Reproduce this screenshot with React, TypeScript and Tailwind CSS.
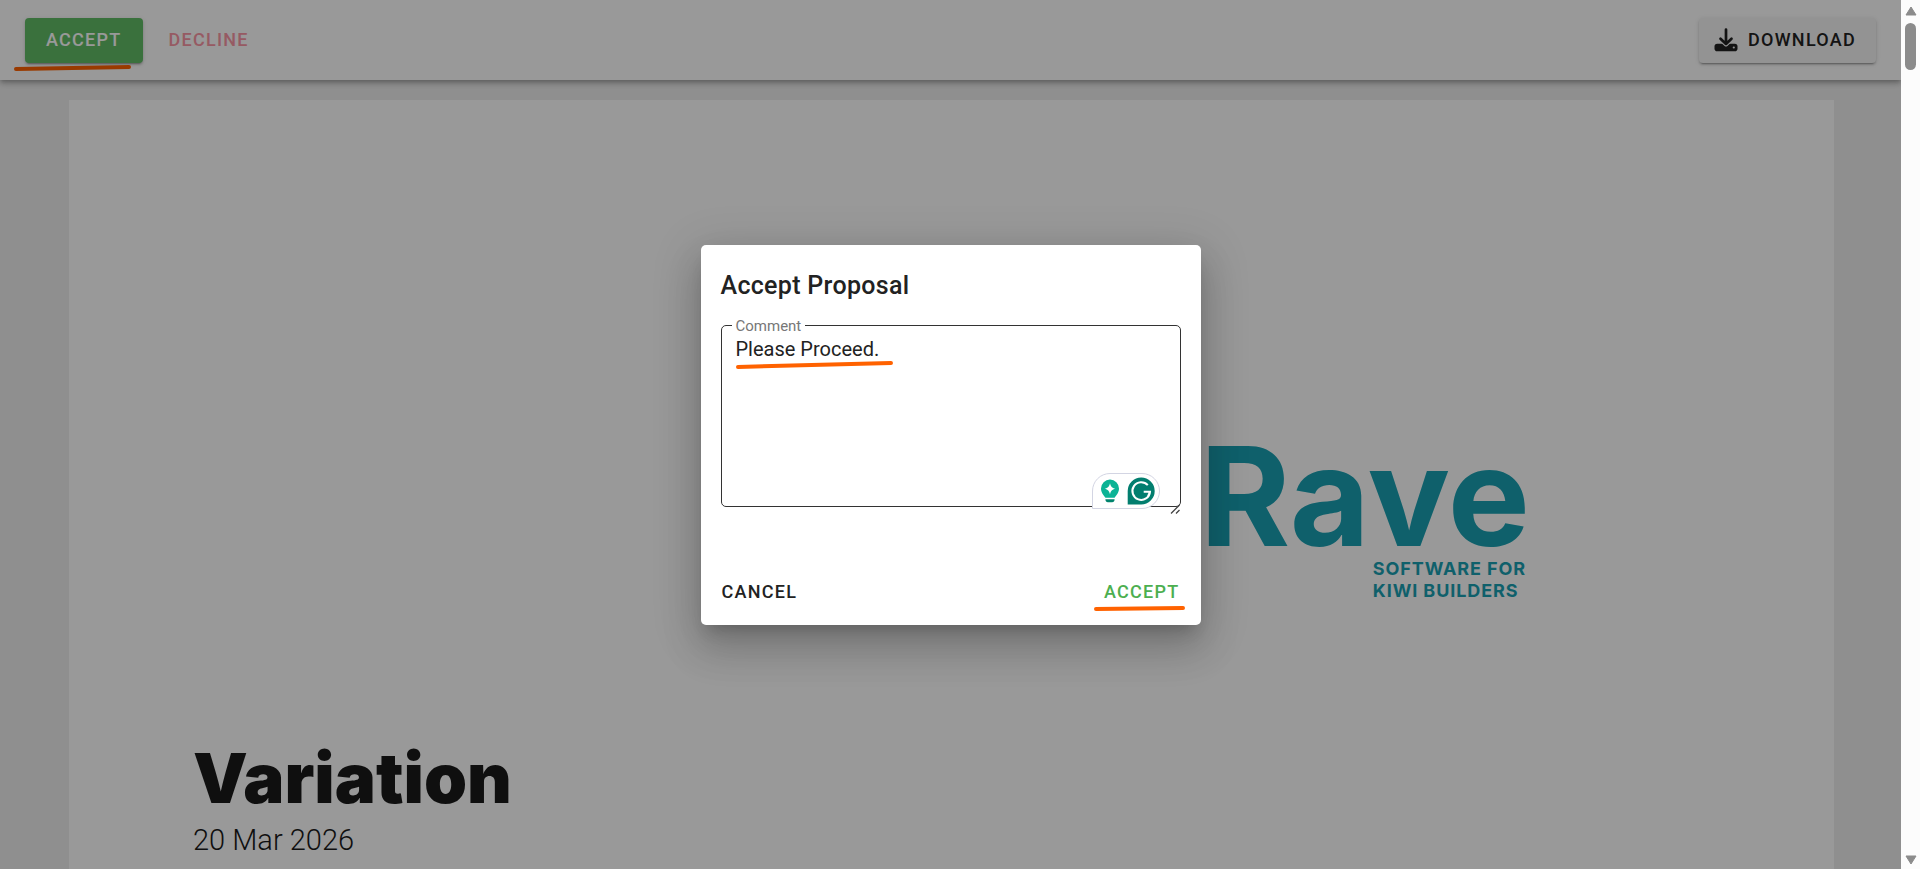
import { useState } from "react";

const Stroke = ({ className, d, viewBox }: { className: string; d: string; viewBox: string }) => (
  <svg className={`pointer-events-none absolute ${className}`} viewBox={viewBox} fill="none" aria-hidden="true">
    <path d={d} stroke="#ff6200" strokeWidth="4" strokeLinecap="round" />
  </svg>
);

const DownloadIcon = () => (
  <svg className="h-6 w-6" viewBox="0 0 24 24" fill="none" aria-hidden="true" strokeLinecap="round" strokeLinejoin="round">
    <rect x="0.5" y="15.8" width="23" height="7.4" rx="2.8" fill="#222" />
    <path d="M6.5 11.2l5.500 5.200 5.500-5.200" stroke="#f5f5f5" strokeWidth="4.2" />
    <path d="M12 1.600v14M6.500 10.700l5.500 5.200 5.500-5.200" stroke="#222" strokeWidth="2.7" />
    <circle cx="19.8" cy="19.5" r="1.1" fill="#f4f4f4" />
  </svg>
);

const AssistantBadge = () => (
  <div className="absolute right-5 -bottom-[3px] flex h-9 items-center gap-2 rounded-full rounded-bl-none border border-[#d3d5e3] bg-white pr-1 pl-2">
    <svg className="h-6 w-[18px]" viewBox="0 0 18 24" aria-hidden="true">
      <path d="M9 .5a9 9 0 0 0-9 9c0 4.200 2.600 6.600 4.400 9.200h9.200C15.400 16.100 18 13.700 18 9.500a9 9 0 0 0-9-9z" fill="#0cb395" />
      <path d="M9 4.200c.9 3.600 1.900 4.700 5.400 5.500-3.500.8-4.500 1.900-5.400 5.500-.9-3.600-1.900-4.700-5.400-5.500 3.500-.8 4.500-1.900 5.400-5.500z" fill="#fff" />
      <path d="M4.400 20.200h9.200c0 1.900-1 3-2.500 3H6.900c-1.500 0-2.500-1.100-2.500-3z" fill="#00836d" />
    </svg>
    <svg className="h-7 w-7" viewBox="0 0 28 28" aria-hidden="true">
      <path d="M14.200.5a13.500 13.500 0 1 1 0 27H.7V14A13.500 13.500 0 0 1 14.200.5z" fill="#027e6f" />
      <path d="M20.800 8.200A8.800 8.800 0 1 0 23 14.800h-6.300M23 14.800l-2.500 5.600" fill="none" stroke="#fff" strokeWidth="2" />
    </svg>
  </div>
);

const Toolbar = () => (
  <header className="relative z-10 flex h-20 items-center gap-2 bg-white px-[25px] shadow-[0_2px_4px_-1px_rgba(0,0,0,0.2),0_4px_5px_rgba(0,0,0,0.14),0_1px_10px_rgba(0,0,0,0.12)]">
    <div className="relative">
      <button className="h-[45px] rounded bg-[#62bd66] px-[21px] text-lg font-medium tracking-[0.07em] text-white shadow-[0_3px_1px_-2px_rgba(0,0,0,0.2),0_2px_2px_rgba(0,0,0,0.14),0_1px_5px_rgba(0,0,0,0.12)]">
        ACCEPT
      </button>
      <Stroke className="-bottom-2 -left-3 h-2 w-[120px]" viewBox="0 0 120 8" d="M3 6L116 4" />
    </div>
    <button className="h-[45px] px-[18px] text-lg font-medium tracking-[0.07em] text-[#fb97a5]">DECLINE</button>
    <button className="ml-auto flex h-[45px] items-center gap-2.5 rounded bg-[#f5f5f5] pr-5 pl-[15px] text-lg font-medium tracking-[0.07em] text-[#222] shadow-[0_3px_1px_-2px_rgba(0,0,0,0.2),0_2px_2px_rgba(0,0,0,0.14),0_1px_5px_rgba(0,0,0,0.12)]">
      <DownloadIcon />
      DOWNLOAD
    </button>
  </header>
);

const ProposalPage = () => (
  <article className="mt-5 mr-[67px] ml-[69px] flex flex-1 flex-col bg-white px-[124px]">
    <div className="mt-[333px] flex flex-col items-end pr-[180px] font-['Inter',sans-serif] font-bold text-[#1aa1b3]">
      <div className="text-[138px] leading-[125px]">Rave</div>
      <div className="pr-1 text-lg leading-[22px] tracking-wider">
        SOFTWARE FOR
        <br />
        KIWI BUILDERS
      </div>
    </div>
    <h1 className="mt-[134px] font-['Inter',sans-serif] text-[69px] leading-[84px] font-black text-[#1a1a1a]">
      Variation
    </h1>
    <p className="mt-0.5 text-[29px] leading-9 font-light text-[#1a1a1a]">20 Mar 2026</p>
  </article>
);

const AcceptDialog = () => {
  const [comment, setComment] = useState("Please Proceed.");

  return (
    <div
      role="dialog"
      aria-labelledby="dialog-title"
      className="w-[500px] rounded-[5px] bg-white px-5 pt-6 pb-2.5 text-[#222] shadow-[0_11px_15px_-7px_rgba(0,0,0,0.2),0_24px_38px_3px_rgba(0,0,0,0.14),0_9px_46px_8px_rgba(0,0,0,0.12)]"
    >
      <h2 id="dialog-title" className="text-[25px] leading-[34px] font-medium tracking-[0.0125em]">
        Accept Proposal
      </h2>
      <div className="relative mt-[22px] h-[182px] rounded-[5px] border border-[#333]">
        <label htmlFor="comment" className="absolute -top-2 left-2.5 bg-white px-1 text-[15px] leading-4 text-[#777]">
          Comment
        </label>
        <textarea
          id="comment"
          className="block h-full w-full resize-none bg-transparent px-3.5 pt-[9px] text-xl outline-none"
          value={comment}
          onChange={(e) => setComment(e.target.value)}
        />
        <Stroke className="top-8 left-3 h-3 w-[164px]" viewBox="0 0 164 12" d="M4 9L157 5" />
        <AssistantBadge />
        <svg className="absolute right-0 -bottom-2 h-2.5 w-2.5" viewBox="0 0 10 10" aria-hidden="true">
          <path d="M1 9.500L9.500 1M6 9.500l3.500-3.500" stroke="#444" strokeWidth="1.3" />
        </svg>
      </div>
      <div className="mt-[63px] flex justify-between px-px">
        <button className="h-[45px] text-lg font-medium tracking-[0.07em]">CANCEL</button>
        <div className="relative">
          <button className="h-[45px] text-lg font-medium tracking-[0.07em] text-[#4caf50]">ACCEPT</button>
          <Stroke className="bottom-[3px] -left-3 h-2 w-[96px]" viewBox="0 0 96 8" d="M4 5L91 4" />
        </div>
      </div>
    </div>
  );
};

const Scrollbar = () => (
  <div className="flex w-[19px] flex-col items-center justify-between bg-[#fcfcfc] pt-1.5 pb-1" aria-hidden="true">
    <div className="flex flex-col items-center gap-[7px]">
      <svg className="h-2.5 w-3" viewBox="0 0 12 10">
        <path d="M6 1l5 8H1z" fill="#8b8b8b" stroke="#8b8b8b" strokeLinejoin="round" />
      </svg>
      <div className="h-[47px] w-[11px] rounded-full bg-[#8b8b8b]" />
    </div>
    <svg className="h-2.5 w-3" viewBox="0 0 12 10">
      <path d="M6 9l5-8H1z" fill="#8b8b8b" stroke="#8b8b8b" strokeLinejoin="round" />
    </svg>
  </div>
);

const App = () => {
  return (
    <div className="flex h-screen font-['Roboto',sans-serif]">
      <div className="relative flex flex-1 flex-col overflow-hidden bg-[#efefef]">
        <Toolbar />
        <ProposalPage />
        <div className="absolute inset-0 z-20 flex items-center justify-center bg-black/40">
          <AcceptDialog />
        </div>
      </div>
      <Scrollbar />
    </div>
  );
};

export default App;
